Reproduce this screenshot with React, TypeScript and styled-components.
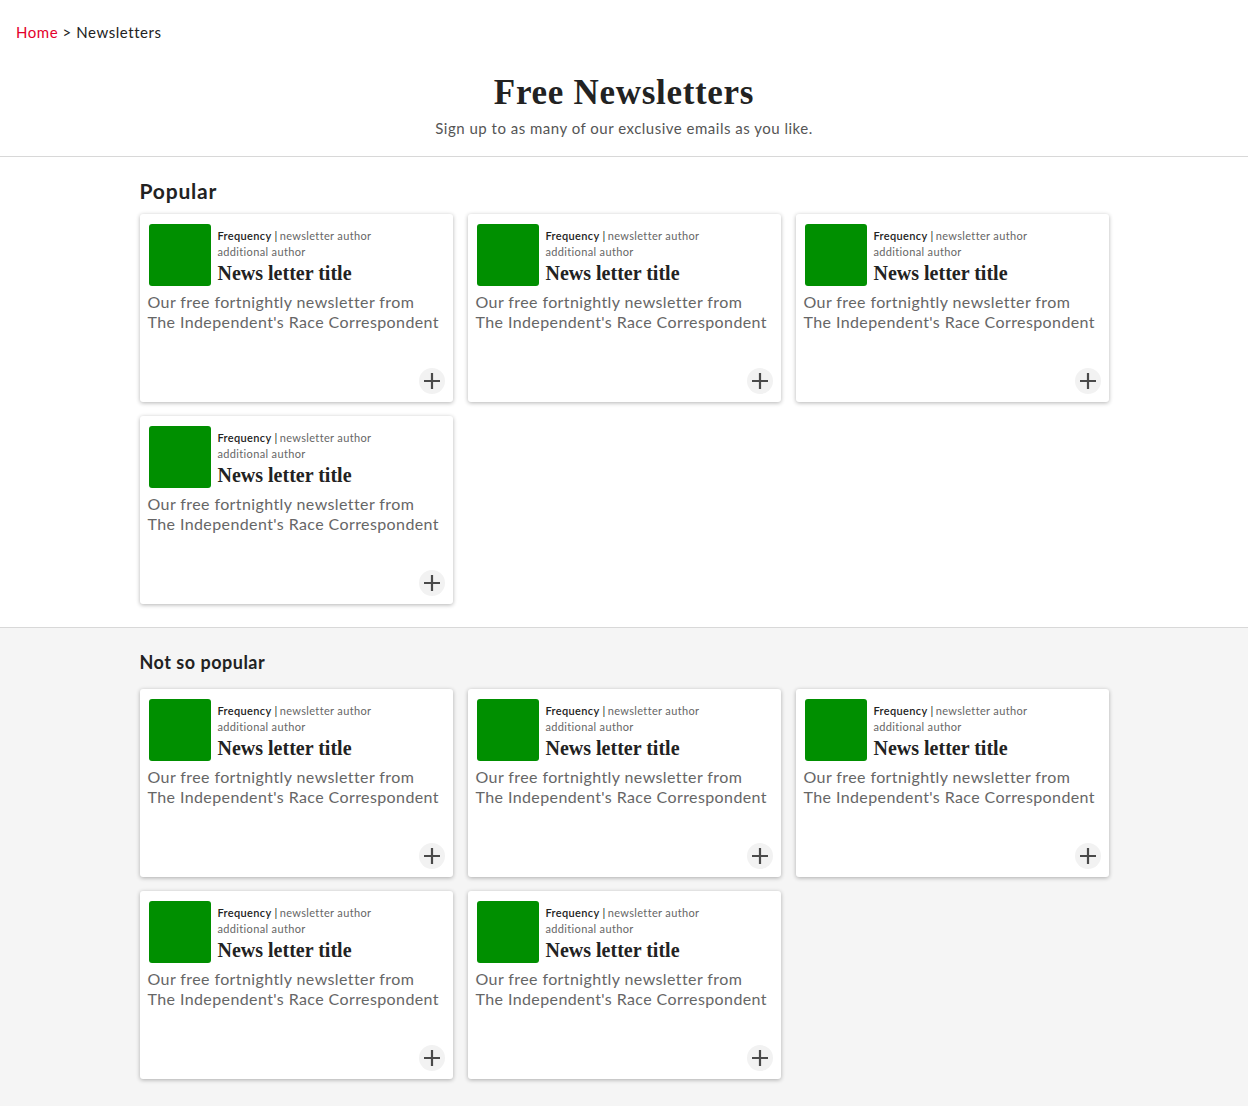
import React from 'react';
import styled, { createGlobalStyle } from 'styled-components';

const GlobalStyle = createGlobalStyle`
  body {
    margin: 0;
    font-family: Lato, "Liberation Sans", sans-serif;
    background: #fff;
    color: #222;
  }
`;

const Breadcrumb = styled.nav`
  padding: 23px 16px 0;
  font-size: 15px;
  line-height: 18px;
  color: #222;
  letter-spacing: 0.55px;
`;
const CrumbLink = styled.a`
  color: #e4002b;
  text-decoration: none;
`;

const Header = styled.header`
  text-align: center;
  padding: 31px 0 19px;
  border-bottom: 1px solid #d8d8d8;
`;
const PageTitle = styled.h1`
  margin: 0;
  font-family: "Liberation Serif", serif;
  font-size: 35px;
  line-height: 42px;
  font-weight: bold;
  letter-spacing: 0.7px;
  color: #222;
`;
const Subtitle = styled.p`
  margin: 5px 0 0;
  font-size: 15px;
  line-height: 18px;
  color: #555;
  letter-spacing: 0.5px;
`;

const Section = styled.section<{ $grey?: boolean }>`
  background: ${(p) => (p.$grey ? '#f5f5f5' : '#fff')};
  border-top: ${(p) => (p.$grey ? '1px solid #d8d8d8' : 'none')};
  padding: ${(p) => (p.$grey ? '22px 0 27px' : '21px 0 23px')};
`;
const Container = styled.div`
  width: 969px;
  margin: 0 auto;
`;
const SectionTitle = styled.h2<{ $small?: boolean }>`
  margin: 0 0 ${(p) => (p.$small ? '14px' : '11px')};
  font-size: ${(p) => (p.$small ? '18px' : '21px')};
  line-height: 25px;
  font-weight: bold;
  letter-spacing: ${(p) => (p.$small ? '0.5px' : '0.8px')};
  color: #222;
`;
const Grid = styled.div`
  display: grid;
  grid-template-columns: repeat(3, 313px);
  column-gap: 15px;
  row-gap: 14px;
`;

const Card = styled.article`
  position: relative;
  box-sizing: border-box;
  height: 188px;
  background: #fff;
  border-radius: 3px;
  box-shadow: 0 1px 4px rgba(0, 0, 0, 0.3);
  padding: 10px 8px;
`;
const CardTop = styled.div`
  display: flex;
  gap: 7px;
  padding-left: 1px;
`;
const Thumb = styled.div`
  width: 62px;
  height: 62px;
  border-radius: 3px;
  background: #008f00;
  flex-shrink: 0;
`;
const Meta = styled.div`
  padding-top: 4px;
`;
const MetaLine = styled.div`
  font-size: 11px;
  line-height: 16px;
  color: #666;
  letter-spacing: 0.35px;
  white-space: nowrap;
`;
const Frequency = styled.span`
  color: #222;
  font-weight: 600;
`;
const Pipe = styled.span`
  color: #222;
  margin: 0 2px 0 3px;
`;
const CardTitle = styled.h3`
  margin: 2px 0 0;
  font-family: "Liberation Serif", serif;
  font-size: 20px;
  line-height: 23px;
  font-weight: bold;
  color: #222;
`;
const Description = styled.p`
  margin: 6px 0 0;
  font-size: 16px;
  line-height: 20px;
  color: #666;
  letter-spacing: 0.4px;
  white-space: nowrap;
`;
const AddButton = styled.button`
  position: absolute;
  right: 8px;
  bottom: 8px;
  width: 26px;
  height: 26px;
  padding: 0;
  border: none;
  border-radius: 50%;
  background: #f2f2f2;
  display: flex;
  align-items: center;
  justify-content: center;
  cursor: pointer;
`;

function PlusIcon() {
  return (
    <svg width="18" height="18" viewBox="0 0 18 18">
      <path d="M9 1v16M1 9h16" stroke="#4a4a4a" strokeWidth="2.2" />
    </svg>
  );
}

function NewsletterCard() {
  return (
    <Card>
      <CardTop>
        <Thumb />
        <Meta>
          <MetaLine>
            <Frequency>Frequency</Frequency>
            <Pipe>|</Pipe>newsletter author
          </MetaLine>
          <MetaLine>additional author</MetaLine>
          <CardTitle>News letter title</CardTitle>
        </Meta>
      </CardTop>
      <Description>
        Our free fortnightly newsletter from
        <br />
        The Independent's Race Correspondent
      </Description>
      <AddButton aria-label="Subscribe">
        <PlusIcon />
      </AddButton>
    </Card>
  );
}

export default function App() {
  return (
    <>
      <GlobalStyle />
      <Breadcrumb>
        <CrumbLink href="#">Home</CrumbLink> &gt; Newsletters
      </Breadcrumb>
      <Header>
        <PageTitle>Free Newsletters</PageTitle>
        <Subtitle>Sign up to as many of our exclusive emails as you like.</Subtitle>
      </Header>

      <Section>
        <Container>
          <SectionTitle>Popular</SectionTitle>
          <Grid>
            {[0, 1, 2, 3].map((i) => (
              <NewsletterCard key={i} />
            ))}
          </Grid>
        </Container>
      </Section>

      <Section $grey>
        <Container>
          <SectionTitle $small>Not so popular</SectionTitle>
          <Grid>
            {[0, 1, 2, 3, 4].map((i) => (
              <NewsletterCard key={i} />
            ))}
          </Grid>
        </Container>
      </Section>
    </>
  );
}
